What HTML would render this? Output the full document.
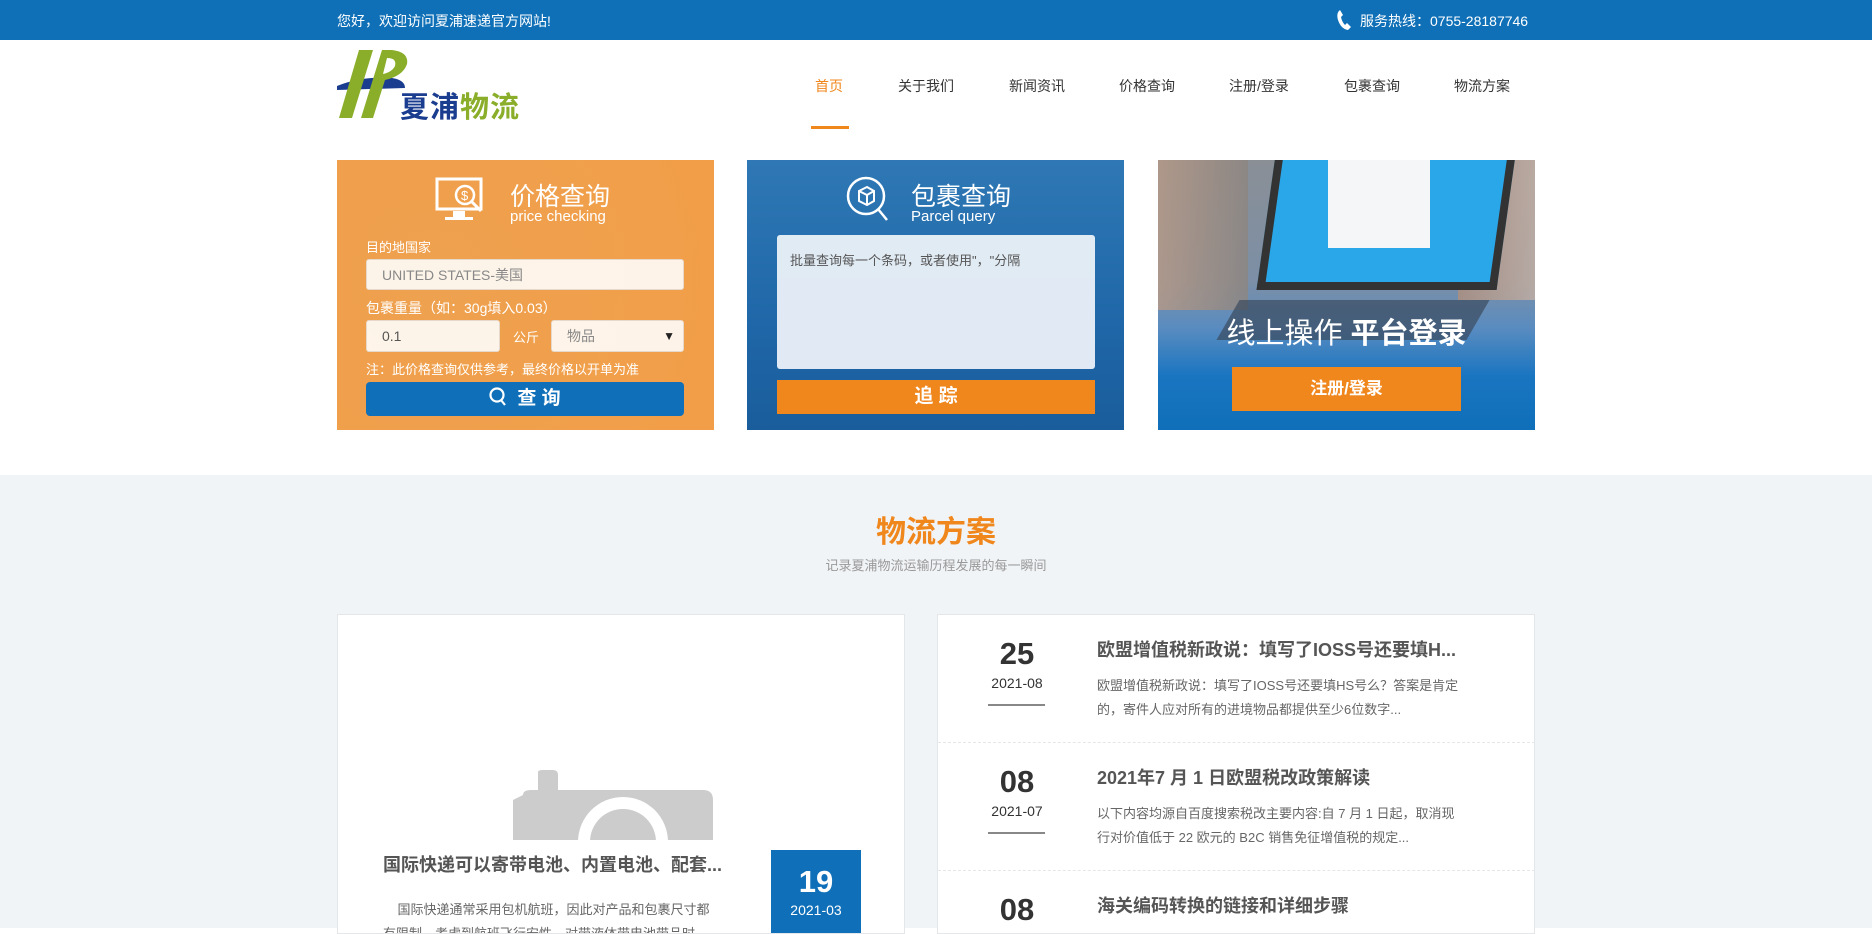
<!DOCTYPE html>
<html><head><meta charset="utf-8"><style>
*{margin:0;padding:0;box-sizing:border-box}
body{width:1872px;height:928px;overflow:hidden;font-family:"Liberation Sans","Noto Sans CJK SC",sans-serif;background:#fff;position:relative;color:#333}
.a{position:absolute}
.top{left:0;top:0;width:1872px;height:40px;background:#0f70b7;color:#fff;font-size:14px}
.nav{font-size:14px;color:#333;top:76px}
.card{top:160px;width:377px;height:270px;overflow:hidden}
.w{color:#fff}
.inp{background:rgba(255,255,255,.88);border:1px solid #e6d9cc;border-radius:3px;color:#888;font-size:14px;padding-left:15px;line-height:30px}
.grey{left:0;top:475px;width:1872px;height:453px;background:#f1f4f7}
.day{font-size:31px;font-weight:bold;color:#333;width:80px;text-align:center;left:977px}
.dt{font-size:14px;color:#333;width:80px;text-align:center;left:977px}
.ul{left:988px;width:57px;height:2px;background:#888}
.tt{left:1097px;font-size:18px;font-weight:bold;color:#555}
.ds{left:1097px;font-size:13px;color:#666;line-height:24px;width:370px}
.sep{left:938px;width:597px;border-top:1px dashed #e6e6e6}
</style></head><body>
<div class="a top"><span class="a" style="left:337px;top:11px">您好，欢迎访问夏浦速递官方网站!</span>
<svg class="a" style="left:1336px;top:9px" width="16" height="22" viewBox="0 0 16 22"><path d="M4 1 L7 6 L5 8 Q6 13 9 16 L11 14 L15 18 L12 21 Q5 20 2 11 Q0 4 4 1Z" fill="#fff"/></svg>
<span class="a" style="left:1360px;top:11px">服务热线：0755-28187746</span></div>
<!-- logo -->
<svg class="a" style="left:337px;top:50px" width="85" height="70" viewBox="0 0 85 70"><path d="M0 36 Q25 26 55 28 Q68 30 68 38 L0 40Z" fill="#1a3d8f"/><path d="M22 0 L36 0 L15 68 L2 68Z" fill="#8aae2a"/><path d="M45 0 L55 0 Q72 2 70 14 Q66 26 48 30 L36 68 L24 68Z" fill="#8aae2a"/><path d="M50 8 Q60 8 58 16 Q55 22 46 24Z" fill="#fff"/></svg>
<div class="a" style="left:400px;top:84px;font-size:29px;font-weight:bold;letter-spacing:1px"><span style="color:#1a3d8f">夏浦</span><span style="color:#8aae2a">物流</span></div>
<div class="a nav" style="left:815px;color:#f0871d">首页</div>
<div class="a nav" style="left:898px">关于我们</div>
<div class="a nav" style="left:1009px">新闻资讯</div>
<div class="a nav" style="left:1119px">价格查询</div>
<div class="a nav" style="left:1229px">注册/登录</div>
<div class="a nav" style="left:1344px">包裹查询</div>
<div class="a nav" style="left:1454px">物流方案</div>
<div class="a" style="left:811px;top:126px;width:38px;height:3px;background:#f0871d"></div>
<!-- card1 -->
<div class="a card" style="left:337px;background:radial-gradient(circle at 100px 120px,#eea14f 0,#f0a04c 40%,#f29e48 100%)">
<svg class="a" style="left:98px;top:17px" width="52" height="46" viewBox="0 0 52 46"><rect x="2" y="2" width="44" height="30" fill="none" stroke="#fff" stroke-width="3"/><rect x="18" y="34" width="12" height="6" fill="#fff"/><rect x="10" y="40" width="28" height="3" fill="#fff"/><circle cx="30" cy="18" r="9" fill="none" stroke="#fff" stroke-width="2.5"/><text x="26" y="23" font-size="13" fill="#fff" font-family="Liberation Sans">$</text><path d="M37 25 L46 34" stroke="#fff" stroke-width="3"/></svg>
<div class="a w" style="left:173px;top:17px;font-size:25px">价格查询</div>
<div class="a w" style="left:173px;top:48px;font-size:15px">price checking</div>
<div class="a w" style="left:29px;top:77px;font-size:13px">目的地国家</div>
<div class="a inp" style="left:29px;top:99px;width:318px;height:31px">UNITED STATES-美国</div>
<div class="a w" style="left:29px;top:138px;font-size:14px">包裹重量（如：30g填入0.03）</div>
<div class="a inp" style="left:29px;top:160px;width:134px;height:32px;color:#555">0.1</div>
<div class="a w" style="left:176px;top:167px;font-size:13px">公斤</div>
<div class="a inp" style="left:214px;top:160px;width:133px;height:32px">物品<span class="a" style="right:8px;top:0;color:#222;font-size:12px">▼</span></div>
<div class="a w" style="left:29px;top:199px;font-size:13px">注：此价格查询仅供参考，最终价格以开单为准</div>
<div class="a" style="left:29px;top:222px;width:318px;height:34px;background:#0f6fb8;border-radius:4px;color:#fff;font-size:19px;font-weight:bold;text-align:center;line-height:34px">
<svg width="18" height="20" viewBox="0 0 18 20" style="vertical-align:-3px;margin-right:10px"><circle cx="8" cy="8" r="6.5" fill="none" stroke="#fff" stroke-width="2.2"/><path d="M12 13 L16 18" stroke="#fff" stroke-width="2.2"/></svg>查 询</div>
</div>
<!-- card2 -->
<div class="a card" style="left:747px;background:linear-gradient(180deg,#2f78b5,#1f67a8 60%,#1a5d9c)">
<svg class="a" style="left:98px;top:15px" width="50" height="50" viewBox="0 0 50 50"><circle cx="21" cy="21" r="18" fill="none" stroke="#fff" stroke-width="2.5"/><path d="M33 34 L42 45" stroke="#fff" stroke-width="2.5"/><path d="M14 16 L22 12 L29 16 L29 26 L22 30 L14 26Z M14 16 L22 20 L29 16 M22 20 L22 30" fill="none" stroke="#fff" stroke-width="2"/></svg>
<div class="a w" style="left:164px;top:17px;font-size:25px">包裹查询</div>
<div class="a w" style="left:164px;top:48px;font-size:15px">Parcel query</div>
<div class="a" style="left:30px;top:75px;width:318px;height:134px;background:rgba(240,244,250,.93);border-radius:3px;font-size:13px;color:#555;padding:15px 13px">批量查询每一个条码，或者使用"，"分隔</div>
<div class="a" style="left:30px;top:220px;width:318px;height:34px;background:#f0871d;color:#fff;font-size:19px;font-weight:bold;text-align:center;line-height:34px">追 踪</div>
</div>
<!-- card3 -->
<div class="a card" style="left:1158px;background:linear-gradient(180deg,#8a8f96 0,#7c8fa6 45%,#5a8cc0 62%,#1a75c1 80%,#0f6fb8 100%)">
<div class="a" style="left:0;top:0;width:90px;height:150px;background:linear-gradient(90deg,#b89a86,#8d8580);opacity:.8"></div>
<div class="a" style="left:300px;top:0;width:77px;height:140px;background:linear-gradient(90deg,#b08f7c,#c4b0a4);opacity:.8"></div>
<div class="a" style="left:108px;top:-5px;width:240px;height:135px;background:#2aa7e8;border-left:8px solid #333;border-right:8px solid #333;border-bottom:8px solid #333;transform:skewX(-8deg)"></div>
<div class="a" style="left:170px;top:0;width:102px;height:88px;background:#f4f6f8"></div>
<div class="a" style="left:70px;top:140px;width:250px;height:40px;background:#3b4a5e;transform:skewX(-30deg);opacity:.7"></div>
<div class="a w" style="left:0;top:150px;width:377px;text-align:center;font-size:29px">线上操作 <b>平台登录</b></div>
<div class="a" style="left:74px;top:207px;width:229px;height:44px;background:#f0871d;color:#fff;font-size:17px;font-weight:bold;text-align:center;line-height:44px">注册/登录</div>
</div>
<!-- grey -->
<div class="a grey"></div>
<div class="a" style="left:0;top:507px;width:1872px;text-align:center;font-size:30px;font-weight:bold;color:#f0871d">物流方案</div>
<div class="a" style="left:0;top:555px;width:1872px;text-align:center;font-size:13px;color:#999">记录夏浦物流运输历程发展的每一瞬间</div>
<div class="a" style="left:337px;top:614px;width:568px;height:320px;background:#fff;border:1px solid #e4e7ea;overflow:hidden">
<svg class="a" style="left:175px;top:155px" width="220" height="70" viewBox="0 0 220 70"><path d="M10 25 Q10 20 18 20 L25 20 L25 2 Q25 0 30 0 L40 0 Q45 0 45 5 L45 20 L190 20 Q200 20 200 30 L200 70 L0 70 L0 30Z" fill="#ccc"/><circle cx="110" cy="72" r="45" fill="#fff"/><circle cx="110" cy="72" r="33" fill="#ccc"/></svg>
<div class="a" style="left:45px;top:236px;font-size:18px;font-weight:bold;color:#555">国际快递可以寄带电池、内置电池、配套...</div>
<div class="a" style="left:45px;top:283px;font-size:13px;color:#666;width:330px;line-height:24px">&nbsp;&nbsp;&nbsp;&nbsp;国际快递通常采用包机航班，因此对产品和包裹尺寸都有限制，考虑到航班飞行安性，对带液体带电池带品时</div>
<div class="a" style="left:433px;top:235px;width:90px;height:90px;background:#0f6fb8;color:#fff;text-align:center"><div style="font-size:31px;font-weight:bold;margin-top:14px">19</div><div style="font-size:14px;margin-top:2px">2021-03</div></div>
</div>
<div class="a" style="left:937px;top:614px;width:598px;height:320px;background:#fff;border:1px solid #e4e7ea"></div>
<div class="a day" style="top:636px">25</div><div class="a dt" style="top:675px">2021-08</div><div class="a ul" style="top:704px"></div>
<div class="a tt" style="top:636px">欧盟增值税新政说：填写了IOSS号还要填H...</div>
<div class="a ds" style="top:674px">欧盟增值税新政说：填写了IOSS号还要填HS号么？答案是肯定的，寄件人应对所有的进境物品都提供至少6位数字...</div>
<div class="a sep" style="top:742px"></div>
<div class="a day" style="top:764px">08</div><div class="a dt" style="top:803px">2021-07</div><div class="a ul" style="top:832px"></div>
<div class="a tt" style="top:764px">2021年7 月 1 日欧盟税改政策解读</div>
<div class="a ds" style="top:802px">以下内容均源自百度搜索税改主要内容:自 7 月 1 日起，取消现行对价值低于 22 欧元的 B2C 销售免征增值税的规定...</div>
<div class="a sep" style="top:870px"></div>
<div class="a day" style="top:892px">08</div>
<div class="a tt" style="top:892px">海关编码转换的链接和详细步骤</div>
</body></html>
